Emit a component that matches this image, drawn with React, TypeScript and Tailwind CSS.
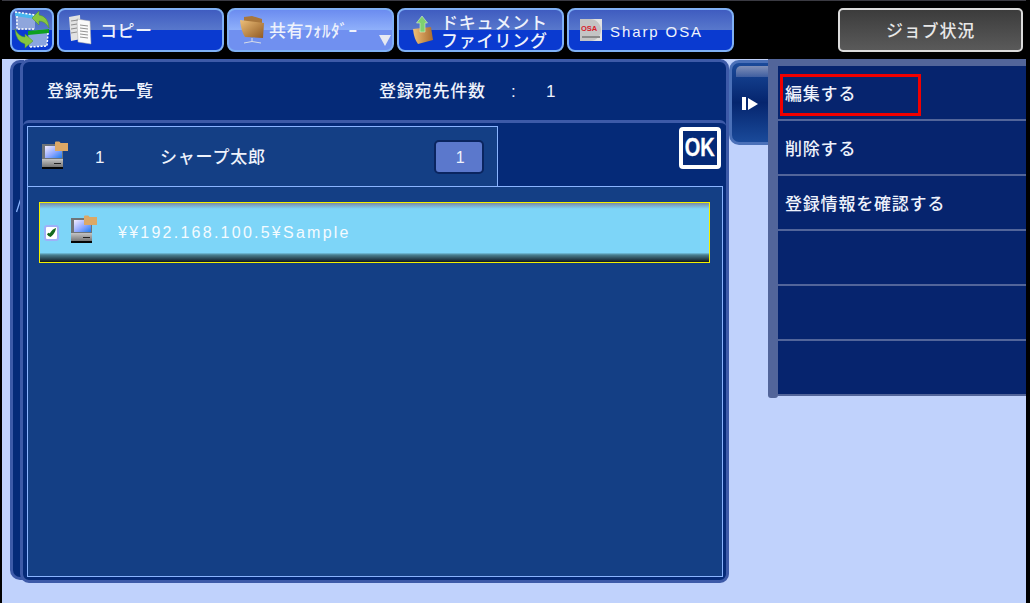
import React from 'react'

const jp = "font-['Liberation_Sans','Noto_Sans_CJK_JP',sans-serif]"

function ServerIcon({ className }: { className: string }) {
  return (
    <svg viewBox="0 0 26 28" className={className}>
      <defs>
        <linearGradient id="screen" x1="0" y1="0" x2="1" y2="1">
          <stop offset="0" stopColor="#f4ecff" />
          <stop offset="0.55" stopColor="#8fa8ff" />
          <stop offset="1" stopColor="#1f7cf0" />
        </linearGradient>
        <linearGradient id="base" x1="0" y1="0" x2="0" y2="1">
          <stop offset="0" stopColor="#c4c4c4" />
          <stop offset="1" stopColor="#767676" />
        </linearGradient>
      </defs>
      <rect x="0" y="3" width="21" height="16" fill="#6f7478" />
      <rect x="3" y="5" width="17" height="12" fill="url(#screen)" />
      <rect x="0" y="18" width="21" height="8" fill="url(#base)" />
      <rect x="12" y="22" width="7" height="1" fill="#222" />
      <rect x="0" y="26" width="21" height="2" fill="#050505" />
      <path d="M13 10V1.500q0-1 1-1h3q1 0 1.500 1.500H26V10z" fill="#dca866" />
    </svg>
  )
}

function HomeIcon() {
  return (
    <svg viewBox="0 0 36 38" className="h-[38px] w-[36px]">
      <path d="M1 1l20 3v14H3z" fill="#8fa6dc" />
      <path d="M1 1l20 3v4L1 5z" fill="#49b6ee" />
      <path d="M1 1l20 3M3 5v13h18" fill="none" stroke="#fff" strokeDasharray="2 1.500" strokeWidth="1.500" />
      <path d="M14 20l20-2-1 17-18 1z" fill="#8ba6e0" />
      <path d="M14 20l21-2v4l-21 2z" fill="#0da020" />
      <path d="M34 22l-1 13-18 1" fill="none" stroke="#fff" strokeDasharray="2 1.500" strokeWidth="1.500" />
      <path d="M18 7l7-7v4q9 1 10 13-4-7-10-7v4z" fill="#86c640" stroke="#4f9428" strokeWidth="0.500" />
      <path d="M19 30l-8 7v-4Q2 31 1 18q4 8 10 8v-3z" fill="#86c640" stroke="#4f9428" strokeWidth="0.500" />
    </svg>
  )
}

function CopyIcon() {
  return (
    <svg viewBox="0 0 24 30" className="h-[30px] w-[24px]">
      <path d="M1 2l11-2 1 24-10 2z" fill="#e2e2e2" />
      <path d="M9 4l13 2 1 23-13-2z" fill="#fafafa" stroke="#a8a8a8" strokeWidth="0.500" />
      <path d="M3 6l7-1M3 10l6-1M3 14l6-1M3 18l6-1M12 10l8 1M12 13l8 1M12 16l8 1M12 19l8 1M12 22l8 1" stroke="#777" strokeWidth="0.800" />
    </svg>
  )
}

function FolderIcon() {
  return (
    <svg viewBox="0 0 24 28" className="h-[28px] w-[24px]">
      <defs>
        <linearGradient id="fold" x1="0" y1="0" x2="1" y2="1">
          <stop offset="0" stopColor="#eec07a" />
          <stop offset="1" stopColor="#8f5820" />
        </linearGradient>
      </defs>
      <path d="M4 1l8-1 10 3v4H4z" fill="#a8763c" />
      <path d="M0 4l24 3-1 15-18-1Q1 15 0 4z" fill="url(#fold)" />
      <path d="M12 22v4M4 27l8-1.500 9 1.500" fill="none" stroke="#d8dde8" strokeWidth="1" />
    </svg>
  )
}

function UploadFolderIcon() {
  return (
    <svg viewBox="0 0 22 28" className="h-[28px] w-[22px]">
      <defs>
        <linearGradient id="doc" x1="0" y1="0" x2="1" y2="0">
          <stop offset="0" stopColor="#f0c078" />
          <stop offset="1" stopColor="#a86c30" />
        </linearGradient>
      </defs>
      <path d="M1 13l18-2 2 13-15 4q-4-5-5-15z" fill="url(#doc)" />
      <path d="M10 0l5.500 7H13v9H8V7H4.500z" fill="#7fd070" stroke="#d8f0c8" strokeWidth="0.600" />
    </svg>
  )
}

function OsaIcon() {
  return (
    <svg viewBox="0 0 22 22" className="h-[22px] w-[22px]">
      <rect width="22" height="22" fill="#c4c4c4" />
      <path d="M10 0a11 11 0 0 1 0 22h12V0z" fill="#e2e2e2" />
      <text x="1" y="12" fontSize="7.500" fontWeight="700" fill="#d8202a" fontFamily="Liberation Sans, sans-serif">OSA</text>
      <rect x="2" y="17" width="18" height="2" fill="#8a8a8a" />
    </svg>
  )
}

const tabClass = 'flex h-[44px] items-center rounded-[8px] border-2 border-[#7fb0f5]'
const blueTab = 'bg-[linear-gradient(#3f5cc0_0%,#5878cc_50%,#0a3ad0_50%,#0a3ad0_100%)]'

export default function App() {
  return (
    <div className={`flex h-[603px] w-[1030px] flex-col overflow-hidden border-r-4 border-l-2 border-black bg-[#c0d2fc] font-medium text-[#eef2fc] ${jp}`}>
      {/* top bar */}
      <div className="flex h-[59px] shrink-0 border-t border-[#3a3a42] bg-black pt-[7px] pl-2">
        <div className={`${tabClass} ${blueTab} w-[44px] justify-center`}>
          <HomeIcon />
        </div>
        <div className={`${tabClass} ${blueTab} ml-[3px] w-[167px] pl-[9px]`}>
          <CopyIcon />
          <span className="ml-[8px] pt-[4px] text-[17px] tracking-[0.500px]">コピー</span>
        </div>
        <div className={`${tabClass} relative ml-[3px] w-[167px] bg-[linear-gradient(#6b8cf0_0%,#8fb0fa_50%,#7090f0_50%,#7090f0_100%)] pl-[11px]`}>
          <FolderIcon />
          <span className="ml-[5px] pt-[4px] text-[17px] tracking-[0.500px]">共有ﾌｫﾙﾀﾞｰ</span>
          <svg viewBox="0 0 12 11" className="absolute top-[25px] right-[1px] h-[11px] w-[12px]">
            <path d="M0 0h12L6 11z" fill="#e6e9f2" />
          </svg>
        </div>
        <div className={`${tabClass} ${blueTab} ml-[3px] w-[167px] pl-[13px]`}>
          <UploadFolderIcon />
          <span className="ml-[7px] pt-[5px] text-[17px] leading-[18px] tracking-[0.800px] whitespace-nowrap">
            ドキュメント
            <br />
            ファイリング
          </span>
        </div>
        <div className={`${tabClass} ${blueTab} ml-[3px] w-[167px] pl-[11px]`}>
          <OsaIcon />
          <span className="ml-[8px] pt-[4px] text-[15px] tracking-[1.900px]">Sharp OSA</span>
        </div>
        <div className="ml-[104px] flex h-[44px] w-[185px] items-center justify-center rounded-[5px] border-2 border-[#dcdcdc] bg-[linear-gradient(#3c3c3c,#5a5a5a)] pt-[4px] text-[17px] tracking-[0.800px] text-[#e8e8e8]">
          ジョブ状況
        </div>
      </div>

      <div className="flex flex-1 items-start pl-2">
        {/* stacked panel edge */}
        <div className="relative mt-[1px] h-[520px] w-[14px] shrink-0 rounded-l-[10px] border-y-[3px] border-l-[3px] border-[#3d5aa8] bg-[#052a78]">
          <svg viewBox="0 0 6 16" className="absolute top-[134px] left-[3px] h-[16px] w-[6px]">
            <path d="M0.500 15L5 1" stroke="#8ab4ff" strokeWidth="1.300" fill="none" />
          </svg>
        </div>

        {/* address list panel */}
        <div className="relative z-10 -ml-[4px] flex h-[524px] w-[709px] shrink-0 flex-col rounded-[9px] border-[3px] border-[#3d5aa8] bg-[#052a78]">
          <div className="flex h-[58px] shrink-0 items-center pt-[2px] pl-[24px] text-[17px] tracking-[0.800px]">
            <span className="w-[332px]">登録宛先一覧</span>
            <span className="w-[132px]">登録宛先件数</span>
            <span className="w-[35px]">:</span>
            <span>1</span>
          </div>
          <div className="flex flex-1 flex-col rounded-t-[6px] border-t-[3px] border-[#3d5aa8] pt-[3px] pr-[3px] pb-[3px] pl-[4px]">
            <div className="flex h-[60px] shrink-0 items-start">
              <div className="flex h-[60px] w-[471px] shrink-0 items-center border-x border-t border-[#8ab4ff] bg-[#143f85] pl-[14px] text-[17px] tracking-[0.800px]">
                <ServerIcon className="-mt-[4px] h-[28px] w-[26px]" />
                <span className="ml-[27px] w-[65px] pt-[3px]">1</span>
                <span className="pt-[2px]">シャープ太郎</span>
                <div className="mr-[13px] ml-[auto] flex h-[34px] w-[50px] items-center justify-center rounded-[5px] border-2 border-[#0a2560] bg-[#5b78cc] pt-[3px] pl-[3px] text-[16px]">
                  1
                </div>
              </div>
              <div className="mt-[1px] ml-[181px] flex h-[42px] w-[42px] shrink-0 items-center justify-center rounded-[4px] border-[4px] border-white bg-[#052a78] text-[25px] font-bold text-white [-webkit-text-stroke:0.300px_white]">
                <span className="scale-x-[0.8]">OK</span>
              </div>
            </div>
            <div className="flex-1 border border-[#8ab4ff] bg-[#143f85] pt-[15px] pl-[11px]">
              <div className="flex h-[61px] w-[671px] items-center border-x border-y-[1.500px] border-[#f4f000] bg-[linear-gradient(#7a8aa8_0%,#7dd5f8_10%,#7dd5f8_84%,#4a7f90_88%,#101820_100%)] pl-[4px]">
                <div className="flex h-[16px] w-[15px] items-center justify-center rounded-[3px] border-2 border-[#9fb0f8] bg-white">
                  <svg viewBox="0 0 12 12" className="h-[11px] w-[11px]">
                    <path d="M1 8Q3 5 4 7 7 2 11 1 10 7 5 11 3 11 1 8z" fill="#146a1e" />
                  </svg>
                </div>
                <ServerIcon className="-mt-[8px] ml-[12px] h-[28px] w-[26px]" />
                <span className="ml-[21px] pt-[1px] font-['Liberation_Sans',sans-serif] text-[16px] tracking-[2.250px] text-[#f4fbff]">
                  ¥¥192.168.100.5¥Sample
                </span>
              </div>
            </div>
          </div>
        </div>

        {/* collapse handle */}
        <div className="mt-[1px] flex h-[85px] w-[39px] shrink-0 flex-col items-end rounded-l-[10px] border-y-[3px] border-l-[3px] border-[#4a70b8] bg-[linear-gradient(#1a4a9a,#05256e_50%,#1a4a9a)]">
          <div className="mt-[3px] h-[11px] w-[32px] rounded-tl-[5px] bg-[linear-gradient(#8090b8,#3f5ea0)]" />
          <div className="mt-[20px] mr-[10px] flex items-center gap-[2px]">
            <div className="h-[13px] w-[4px] bg-white" />
            <div className="h-0 w-0 border-y-[6.500px] border-l-[10px] border-y-transparent border-l-white" />
          </div>
        </div>

        {/* action menu */}
        <div className="flex w-[258px] shrink-0 items-start">
          <div className="h-[339px] w-[10px] shrink-0 rounded-b-[3px] bg-[#52659a]" />
          <div className="relative flex-1 border-t-[7px] border-[#52659a]">
            {['編集する', '削除する', '登録情報を確認する', '', '', ''].map((label, i) => (
              <div key={i} className="flex h-[55px] items-center border-b-2 border-[#52659a] bg-[#06246e] pt-[4px] pl-[7px] text-[17px] tracking-[0.800px]">
                {label}
              </div>
            ))}
            <div className="absolute top-[8px] left-[2px] h-[42px] w-[141px] border-[3px] border-[#f00000]" />
          </div>
        </div>
      </div>
    </div>
  )
}
